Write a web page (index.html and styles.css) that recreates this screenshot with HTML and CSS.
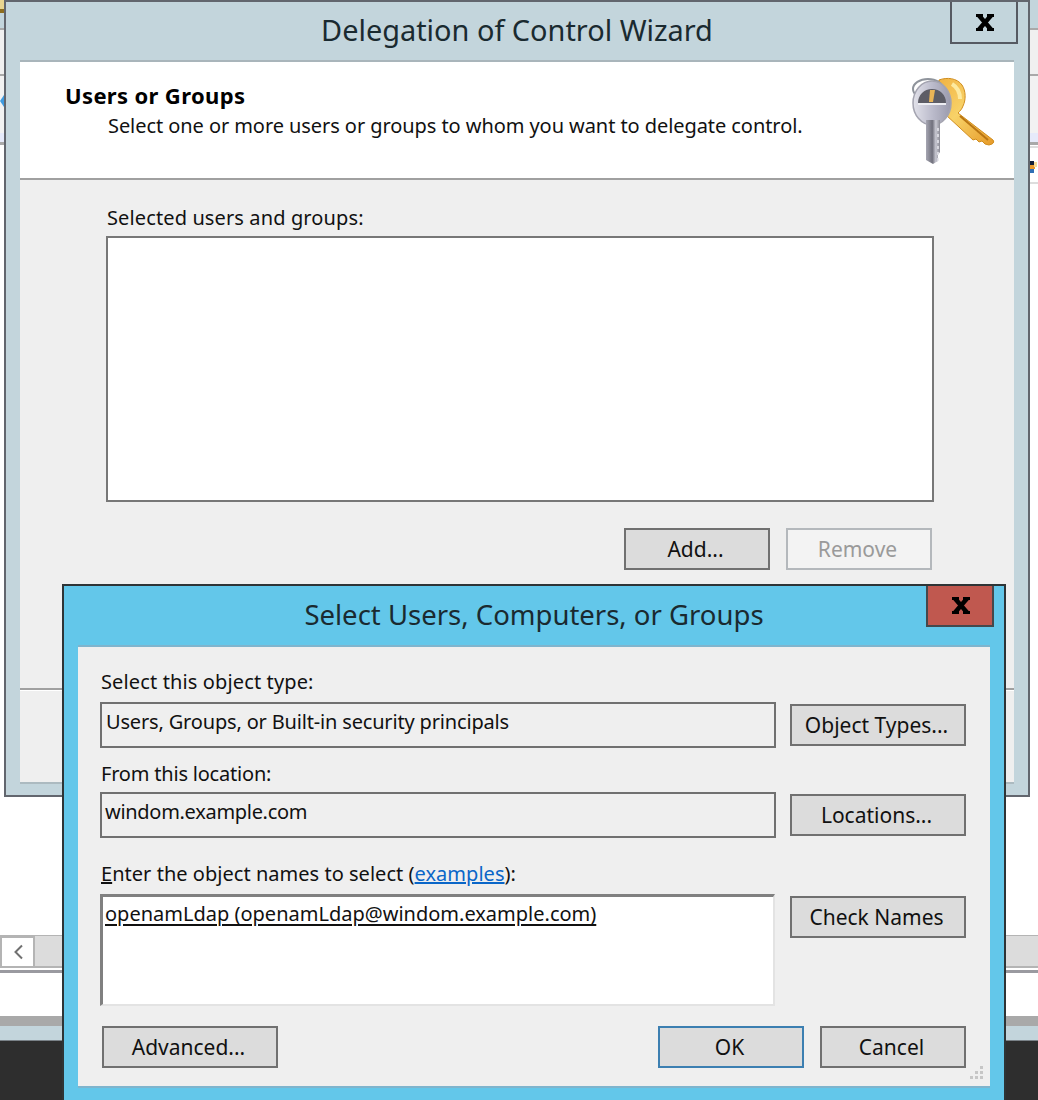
FILE: index.html
```html
<!DOCTYPE html>
<html lang="en">
<head>
<meta charset="utf-8">
<title>Delegation of Control Wizard</title>
<link rel="stylesheet" href="styles.css">
</head>
<body>
<div class="desktop">
  <div class="backdrop">
    <div class="bk-title"><span class="bk-accent"></span></div>
    <div class="bk-toolbar"></div>
    <div class="bk-ribbon"></div>
    <div class="bk-sel"></div>
    <div class="bk-content"></div>
    <div class="bk-scroll">
      <span class="bk-scroll-btn"><svg width="10" height="16" viewBox="0 0 10 16"><path d="M9 1.500 2.500 8 9 14.500" fill="none" stroke="#707070" stroke-width="2"/></svg></span>
      <span class="bk-scroll-track"></span>
    </div>
    <div class="bk-status"></div>
    <div class="bk-gray"></div>
    <div class="bk-blue"></div>
    <div class="bk-task"></div>
  </div>
  <svg class="frag-left" width="4" height="12" viewBox="0 0 4 12"><path d="M4 0 0 6l4 6z" fill="#3f9be0"/></svg>
  <svg class="frag-right" width="7" height="14" viewBox="0 0 7 14"><rect width="4" height="4" fill="#10203a"/><rect y="4" width="5" height="4" fill="#e99a2c"/><rect y="8" width="4" height="4" fill="#2f6fb5"/><rect x="4" y="1" width="3" height="5" fill="#f6dc9a"/></svg>
  <span class="frag-line frag-line-a"></span>
  <span class="frag-line frag-line-b"></span>

  <section class="wizard">
    <header class="wizard-title">
      <h1 class="title-text title-big">Delegation of Control Wizard</h1>
      <span class="close close-idle"><svg class="close-x" width="18" height="17" viewBox="0 0 18 17"><path d="M3 1.500 15 15.500M15 1.500 3 15.500" stroke="#000" stroke-width="4.500" fill="none"/><path d="M0 0h7v3H0zM11 0h7v3h-7zM0 14h7v3H0zM11 14h7v3h-7z" fill="#000"/></svg></span>
    </header>
    <div class="wizard-client">
      <div class="wizard-head">
        <div class="head-text">
          <div class="head-main">Users or Groups</div>
          <div class="head-sub">Select one or more users or groups to whom you want to delegate control.</div>
        </div>
        <svg class="keys" width="95" height="100" viewBox="0 0 95 100">
          <defs>
            <linearGradient id="gold" x1="0" y1="0" x2="1" y2="1"><stop offset="0" stop-color="#f0b040"/><stop offset=".45" stop-color="#f8d268"/><stop offset="1" stop-color="#e69a28"/></linearGradient>
            <linearGradient id="silver" x1="0" y1="0" x2="1" y2="0"><stop offset="0" stop-color="#e2e2ea"/><stop offset=".5" stop-color="#bcbccc"/><stop offset="1" stop-color="#9a9aac"/></linearGradient>
            <linearGradient id="shaft" x1="0" y1="0" x2="1" y2="0"><stop offset="0" stop-color="#a6a6b2"/><stop offset=".45" stop-color="#70707c"/><stop offset=".7" stop-color="#c8c8d2"/><stop offset="1" stop-color="#8a8a94"/></linearGradient>
            <filter id="soft"><feGaussianBlur stdDeviation="0.5"/></filter>
          </defs>
          <g filter="url(#soft)">
            <path d="M33 10c8-3 18-2 23 5 4 6 4 15 1 21-1 3-3 5-5 7l35 27c1 1 1 3-1 4l-3 1-4-1-3-3-3 1-3-3-3 1-27-25-10-3z" fill="url(#gold)" stroke="#d08c1c" stroke-width="1"/>
            <path d="M54 46 82 70" stroke="#b87512" stroke-width="2" fill="none"/>
            <path d="M46 14c5 3 8 8 8 15" stroke="#fdeaa0" stroke-width="4" fill="none"/>
            <ellipse cx="22" cy="19" rx="15" ry="10" fill="none" stroke="#8f949c" stroke-width="2"/>
            <ellipse cx="26" cy="33" rx="19" ry="22" fill="url(#silver)" stroke="#a4a4b0" stroke-width="1.500"/>
            <path d="M12 33c0-8 6-14 14-14s14 6 14 14z" fill="#5d5d66"/>
            <path d="M12 33h28v2H12z" fill="#eeeef2"/>
            <path d="M24 20h5l-2 12h-4z" fill="#eab556"/>
            <path d="M20 50h14v32l-2 3v6l-5 3-7-4z" fill="url(#shaft)"/>
            <path d="M32 58v34" stroke="#e8e8ee" stroke-width="1.500" stroke-dasharray="3 3" fill="none"/>
          </g>
        </svg>
      </div>
      <div class="wizard-body">
        <div class="list-label">Selected users and groups:</div>
        <div class="list-box"></div>
        <div class="wizard-actions">
          <button class="btn btn-wide">Add...</button>
          <button class="btn btn-wide btn-off">Remove</button>
        </div>
      </div>
      <div class="wizard-foot"></div>
    </div>
  </section>

  <section class="picker">
    <header class="picker-title">
      <h2 class="title-text title-mid">Select Users, Computers, or Groups</h2>
      <span class="close close-hot"><svg class="close-x" width="18" height="17" viewBox="0 0 18 17"><path d="M3 1.500 15 15.500M15 1.500 3 15.500" stroke="#000" stroke-width="4.500" fill="none"/><path d="M0 0h7v3H0zM11 0h7v3h-7zM0 14h7v3H0zM11 14h7v3h-7z" fill="#000"/></svg></span>
    </header>
    <div class="picker-client">
      <div class="picker-form">
        <div class="lbl lbl-first">Select this object type:</div>
        <div class="field field-type">Users, Groups, or Built-in security principals</div>
        <button class="btn btn-side">Object Types...</button>
        <div class="lbl lbl-second">From this location:</div>
        <div class="field field-loc">windom.example.com</div>
        <button class="btn btn-side">Locations...</button>
        <div class="lbl lbl-third"><u>E</u>nter the object names to select (<a class="link" href="#">examples</a>):</div>
        <div class="names"><u class="name-entry">openamLdap (openamLdap@windom.example.com)</u></div>
        <button class="btn btn-side btn-top">Check Names</button>
      </div>
      <div class="picker-actions">
        <button class="btn btn-adv">Advanced...</button>
        <span class="spacer"></span>
        <button class="btn btn-wide btn-default">OK</button>
        <button class="btn btn-wide">Cancel</button>
      </div>
      <svg class="grip" width="16" height="16" viewBox="0 0 16 16" fill="#c6c6c6"><rect x="12" y="0" width="3" height="3"/><rect x="7" y="5" width="3" height="3"/><rect x="12" y="5" width="3" height="3"/><rect x="2" y="10" width="3" height="3"/><rect x="7" y="10" width="3" height="3"/><rect x="12" y="10" width="3" height="3"/></svg>
    </div>
  </section>
</div>
</body>
</html>
```
FILE: styles.css
```css
* { box-sizing: border-box; }
html, body { margin: 0; padding: 0; }
body { font-family: "Noto Sans", "Open Sans", sans-serif; color: #111; background: #fff; }
.desktop { position: relative; width: 1038px; height: 1100px; overflow: hidden; background: #fff; }

/* the application behind the dialogs */
.backdrop { display: flex; flex-direction: column; height: 100%; }
.bk-title { height: 30px; background: #c3d5dc; border-bottom: 2px solid #a9a9a9; }
.bk-accent { display: block; width: 4px; height: 13px; background: linear-gradient(#e9d590 0 9px, #8e6d1e 9px); }
.bk-toolbar { height: 46px; background: #f0f0f0; border-bottom: 2px solid #a9a9a9; }
.bk-ribbon { height: 57px; background: #f2f2f2; }
.bk-sel { height: 12px; background: #e6eafa; border-bottom: 3px solid #a9a9a9; }
.bk-content { height: 790px; background: #fff; }
.bk-scroll { height: 35px; display: flex; background: #fff; border-top: 1px solid #b4b4b4; padding-bottom: 2px; }
.bk-scroll-btn { width: 35px; display: flex; align-items: center; justify-content: center; background: #fff; border: 2px solid #b4b4b4; }
.bk-scroll-track { flex: 1; background: #dcdcdc; border-bottom: 2px solid #b4b4b4; }
.bk-status { height: 46px; background: #fff; border-top: 3px solid #9a9aa0; }
.bk-gray { height: 10px; background: #a9a9a9; }
.bk-blue { height: 15px; background: #c3d5dc; border-bottom: 1px solid #7a8288; }
.bk-task { flex: 1; background: #2e2e2e; }
.frag-left { position: absolute; left: 0; top: 95px; }
.frag-right { position: absolute; left: 1030px; top: 161px; }
.frag-line { position: absolute; left: 1030px; width: 8px; height: 2px; background: #dddddd; }
.frag-line-a { top: 146px; }
.frag-line-b { top: 182px; }

/* shared window parts */
.title-text { margin: 0; font-weight: 400; line-height: 36px; color: #1a2a30; text-align: center; }
.title-big { font-size: 28.900px; }
.title-mid { font-size: 27.500px; }
.close { position: absolute; top: 0; width: 68px; height: 42px; padding-left: 2px; display: flex; align-items: center; justify-content: center; }
.close-x { display: block; }

/* wizard window */
.wizard { position: absolute; left: 4px; top: 0; width: 1026px; height: 797px; background: #c3d5dc; border: 2px solid #62666e; padding: 0 14px 11px; display: flex; flex-direction: column; }
.wizard-title { height: 58px; padding-top: 10px; }
.close-idle { right: 10px; border: 2px solid #565a62; border-top: 0; background: #c3d5dc; }
.wizard-client { flex: 1; display: flex; flex-direction: column; background: #efefef; border-bottom: 2px solid #acbac0; }
.wizard-head { height: 120px; position: relative; background: #fff; border-bottom: 2px solid #a0a0a0; border-top: 2px solid #a9b5bb; padding: 19px 0 0 45px; }
.head-main { font-size: 22px; line-height: 28px; font-weight: 700; color: #000; letter-spacing: .35px; }
.head-sub { font-size: 20px; line-height: 28px; margin: 3px 0 0 43px; letter-spacing: -.07px; }
.keys { position: absolute; right: 13px; top: 8px; }
.wizard-body { height: 508px; padding: 24px 80px 0 86px; }
.list-label { font-size: 20px; line-height: 28px; margin: 0 0 4px 1px; letter-spacing: .12px; }
.list-box { height: 266px; background: #fff; border: 2px solid #777; }
.wizard-actions { display: flex; justify-content: flex-end; gap: 16px; margin-top: 26px; padding-right: 2px; }
.wizard-foot { border-top: 2px solid #a0a0a0; box-shadow: inset 0 1px 0 #fff; flex: 1; }

/* buttons */
.btn { height: 42px; padding: 0 3px 0 0; font: inherit; font-size: 21px; line-height: 24px; color: #111; background: #dcdcdc; border: 2px solid #707070; border-radius: 0; }
.btn-wide { width: 146px; }
.btn-off { color: #9a9a9a; background: #f3f3f3; border-color: #b4b8bc; }
.btn-default { border-color: #3c7fb1; }
.btn-side { width: 176px; align-self: center; }
.btn-top { align-self: start; margin-top: 2px; }
.btn-adv { width: 176px; }

/* picker window */
.picker { position: absolute; left: 62px; top: 584px; width: 944px; height: 530px; background: #63c7ea; border: 2px solid #2e3436; padding: 0 14px; }
.picker-title { height: 59px; padding-top: 11px; }
.close-hot { right: 10px; height: 41px; background: #c0584f; border: 2px solid #44484c; border-top: 0; }
.picker-client { position: relative; height: 441px; background: #efefef; border-top: 2px solid #7fb4cd; box-shadow: 0 2px 0 #7fb4cd; padding: 23px 24px 0 22px; }
.picker-form { display: grid; grid-template-columns: 676px 176px; column-gap: 14px; font-size: 20px; }
.lbl { grid-column: 1 / -1; line-height: 24px; padding-left: 1px; }
.lbl-first { height: 32px; letter-spacing: .13px; }
.lbl-second { height: 44px; padding-top: 14px; letter-spacing: -.2px; }
.lbl-third { height: 56px; padding-top: 24px; letter-spacing: .03px; }
.link { color: #0a66c8; }
.field { height: 46px; padding: 6px 4px; line-height: 24px; border: 2px solid #707070; background: #efefef; }
.field-type { letter-spacing: -.17px; }
.field-loc { padding-left: 3px; letter-spacing: -.3px; }
.names { width: 675px; height: 112px; padding: 5px 2px; line-height: 24px; background: #fff; border-style: solid; border-width: 3px 2px 2px 3px; border-color: #808080 #e3e3e3 #e3e3e3 #808080; }
.name-entry { text-decoration-thickness: 2px; text-underline-offset: 3px; }
.picker-actions { display: flex; gap: 16px; margin-top: 20px; padding-left: 2px; font-size: 20px; }
.spacer { flex: 1; }
.grip { position: absolute; right: 6px; bottom: 4px; }
```
